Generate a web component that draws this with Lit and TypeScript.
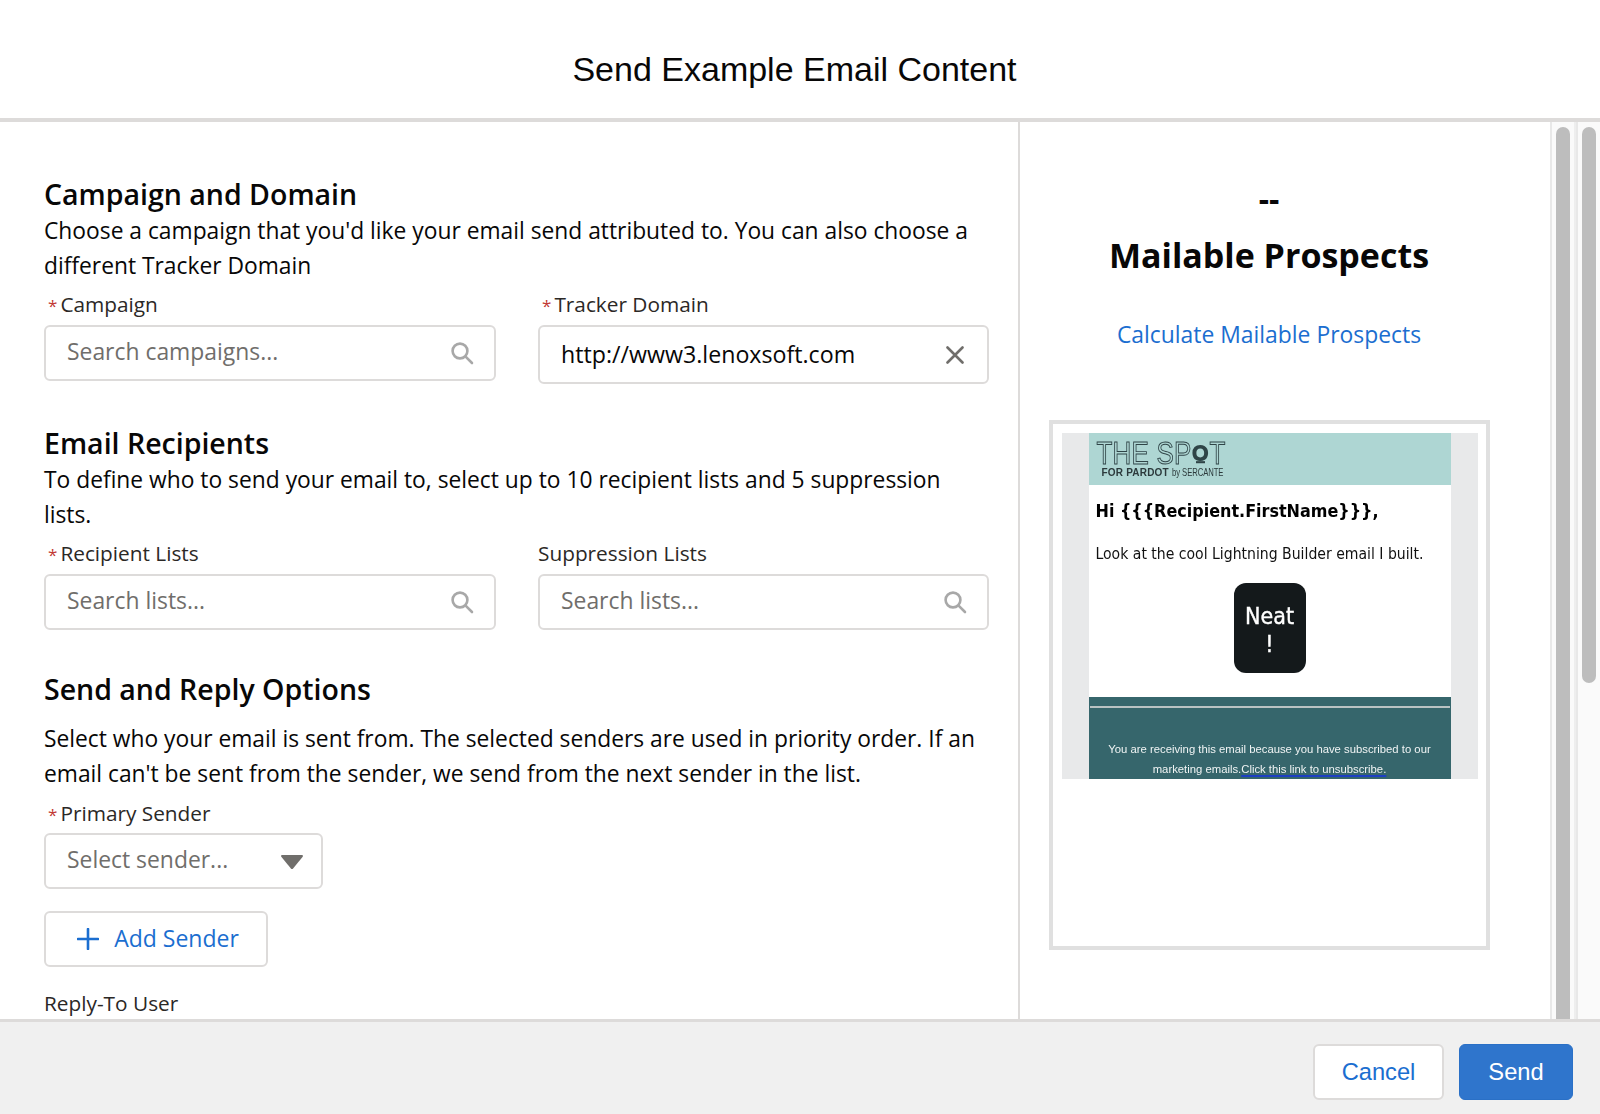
import { LitElement, html, css } from "lit";
import { customElement } from "lit/decorators.js";

const searchIcon = html`<svg class="ic" width="24" height="24" viewBox="0 0 24 24" fill="none" stroke="#a8a8a8" stroke-width="2.6" stroke-linecap="round"><circle cx="10" cy="10" r="7.4"/><path d="M15.6 15.6 22 22"/></svg>`;

@customElement("app-root")
export class AppRoot extends LitElement {
  static styles = css`
    :host { display: block; }
    * { box-sizing: border-box; }
    .modal { width: 1600px; height: 1114px; display: flex; flex-direction: column; overflow: hidden; background: #fff; font-family: "Open Sans", "Noto Sans", sans-serif; color: #080707; }
    .top { height: 122px; flex: none; border-bottom: 4px solid #dddbda; display: flex; align-items: center; justify-content: center; padding: 20px 11px 0 0; }
    .top h1 { margin: 0; font: 400 34px/44px "Liberation Sans", Arial, sans-serif; color: #080707; }
    .body { flex: 1; min-height: 0; display: flex; }
    .left { width: 1020px; flex: none; border-right: 2px solid #dddbda; padding: 55px 29px 0 44px; overflow: hidden; }
    .sec { margin-bottom: 42px; }
    h2 { margin: 0; font-size: 28.5px; line-height: 35px; font-weight: 600; color: #080707; }
    p { margin: 1px 0 0; font-size: 22.8px; line-height: 35px; }
    .sec3 p { margin-top: 14px; }
    .row { display: grid; grid-template-columns: 452px 451px; column-gap: 42px; align-items: start; margin-top: 6px; }
    label { display: block; font-size: 20.8px; line-height: 30px; color: #2b2826; margin-bottom: 6px; white-space: nowrap; }
    label.req { padding-left: 4px; }
    .star { color: #c23934; font-size: 17px; line-height: 0; margin-right: 3px; }
    .input { height: 56px; border: 2px solid #dddbda; border-radius: 6px; background: #fff; display: flex; align-items: center; justify-content: space-between; padding: 0 20px 3px 21px; font-size: 22.9px; color: #706e6b; }
    .input .ic { margin-top: 3px; }
    .input.value { height: 59px; color: #080707; padding: 0 23px 2px 21px; font-size: 23.2px; }
    .input.value svg { margin-top: 2px; }
    .select { width: 279px; padding-right: 18px; margin-top: -1px; }
    .select svg { margin-top: 5px; }
    .sp { height: 7px; }
    .add { width: 224px; height: 56px; margin-top: 22px; border: 2px solid #dddbda; border-radius: 6px; display: flex; align-items: center; justify-content: center; gap: 15px; font-size: 23px; color: #1b6ed0; background: #fff; padding: 0 0 2px 4px; }
    .add svg { margin-top: 2px; }
    .reply { margin: 21px 0 0; }
    .right { flex: 1; min-width: 0; display: flex; flex-direction: column; align-items: center; padding: 59px 32px 0 0; }
    .dash { font-size: 32px; font-weight: 700; line-height: 35px; }
    .mail { font-size: 34px; font-weight: 700; line-height: 44px; margin-top: 17px; color: #080707; }
    .calc { font-size: 22.9px; line-height: 34px; color: #1b6ed0; margin-top: 41px; }
    .frame { width: 441px; height: 530px; margin-top: 68px; border: 4px solid #e0e0e0; padding: 9px; flex: none; }
    .shot { height: 346px; width: 416px; background: #e8e9ea; padding: 0 27px; filter: blur(0.35px); }
    .mail-body { height: 100%; background: #fff; display: flex; flex-direction: column; }
    .banner { height: 51.5px; background: #aed6d3; padding: 4px 0 0 8px; color: #2c3a3c; flex: none; overflow: hidden; }
    .logo { font: 400 26px/26px "Liberation Sans", Arial, sans-serif; color: transparent; -webkit-text-stroke: 0.8px #2f4447; white-space: nowrap; height: 29px; letter-spacing: 0.2px; transform: scaleY(1.22); transform-origin: top left; }
    .o { position: relative; display: inline-block; font-size: 20px; line-height: 20px; vertical-align: 2px; -webkit-text-stroke: 2px #2f4447; margin: 0 1px; transform: scaleY(0.85); }
    .o::after { content: ""; position: absolute; left: 3px; right: 3px; bottom: 0; height: 2px; background: #2f4447; }
    .sub { font: 700 10px/12px "Liberation Sans", Arial, sans-serif; margin-left: 5px; letter-spacing: 0.2px; white-space: nowrap; }
    .sub span { display: inline-block; font: 400 11px/12px "Liberation Sans", sans-serif; letter-spacing: -0.1px; transform: scaleX(0.7); transform-origin: left center; }
    .hi { font: 700 17.8px/24px "DejaVu Sans Condensed", "DejaVu Sans", sans-serif; margin: 14.5px 0 0 7px; color: #000; white-space: nowrap; }
    .look { font: 400 15.6px/20px "DejaVu Sans Condensed", "DejaVu Sans", sans-serif; margin: 21px 0 0 7px; color: #111; white-space: nowrap; }
    .neat { width: 72px; height: 90px; margin: 19px auto 0; background: #14191b; border-radius: 12px; color: #fff; -webkit-text-stroke: 0.4px #fff; font: 400 23px/28px "DejaVu Sans Condensed", "DejaVu Sans", sans-serif; text-align: center; padding-top: 19px; flex: none; }
    .foot { flex: 1; margin-top: 24px; background: #36666c; color: #f0f4f4; font: 400 11.3px/20px "Liberation Sans", Arial, sans-serif; text-align: center; padding-top: 42px; position: relative; white-space: nowrap; overflow: hidden; }
    .foot::before { content: ""; position: absolute; left: 1px; right: 1px; top: 9px; height: 2px; background: #b9c2c3; }
    .foot u { text-decoration-color: #1c3fc4; text-underline-offset: 2px; text-decoration-thickness: 1.5px; }
    .bars { width: 50px; flex: none; display: flex; }
    .track { width: 26px; flex: none; background: #fafafa; border-left: 2px solid #e8e8e8; border-right: 2px solid #eee; padding: 5px 4px 0; }
    .thumb { width: 14px; border-radius: 7px 7px 0 0; background: #bdbdbd; height: 920px; }
    .thumb.short { height: 556px; border-radius: 7px; }
    .bottom { height: 95px; flex: none; background: #f0f0f0; border-top: 3px solid #dddbda; display: flex; justify-content: flex-end; align-items: flex-start; gap: 15px; padding: 22px 27px 0 0; }
    .btn { height: 56px; border-radius: 6px; display: flex; align-items: center; justify-content: center; font: 400 23.7px "Liberation Sans", Arial, sans-serif; }
    .cancel { width: 131px; background: #fff; border: 2px solid #dddbda; color: #1b6ed0; }
    .send { width: 114px; background: #2f75cc; color: #fff; border: 1px solid #2a70c6; }
  `;

  render() {
    return html`
      <div class="modal">
        <header class="top"><h1>Send Example Email Content</h1></header>
        <div class="body">
          <main class="left">
            <section class="sec">
              <h2>Campaign and Domain</h2>
              <p>Choose a campaign that you'd like your email send attributed to. You can also choose a different Tracker Domain</p>
              <div class="row">
                <div><label class="req"><span class="star">*</span>Campaign</label><div class="input"><span>Search campaigns...</span>${searchIcon}</div></div>
                <div><label class="req"><span class="star">*</span>Tracker Domain</label><div class="input value"><span>http://www3.lenoxsoft.com</span><svg width="18" height="18" viewBox="0 0 18 18" stroke="#706e6b" stroke-width="2.6" stroke-linecap="round"><path d="M1.5 1.5l15 15M16.5 1.5l-15 15"/></svg></div></div>
              </div>
            </section>
            <section class="sec">
              <h2>Email Recipients</h2>
              <p>To define who to send your email to, select up to 10 recipient lists and 5 suppression lists.</p>
              <div class="row">
                <div><label class="req"><span class="star">*</span>Recipient Lists</label><div class="input"><span>Search lists...</span>${searchIcon}</div></div>
                <div><label>Suppression Lists</label><div class="input"><span>Search lists...</span>${searchIcon}</div></div>
              </div>
            </section>
            <section class="sec3">
              <h2>Send and Reply Options</h2>
              <p>Select who your email is sent from. The selected senders are used in priority order. If an email can't be sent from the sender, we send from the next sender in the list.</p>
              <div class="sp"></div>
              <label class="req"><span class="star">*</span>Primary Sender</label>
              <div class="input select"><span>Select sender...</span><svg width="22" height="14" viewBox="0 0 22 14" fill="#706e6b"><path d="M1.2 0h19.6c1 0 1.5 1 .9 1.8l-9.6 11.6c-.6.7-1.6.7-2.2 0L.3 1.8C-.3 1 .2 0 1.2 0z"/></svg></div>
              <div class="add"><svg width="22" height="22" viewBox="0 0 22 22" stroke="#1b6ed0" stroke-width="2.6" stroke-linecap="round"><path d="M11 1v20M1 11h20"/></svg><span>Add Sender</span></div>
              <label class="reply">Reply-To User</label>
            </section>
          </main>
          <aside class="right">
            <div class="dash">--</div>
            <div class="mail">Mailable Prospects</div>
            <div class="calc">Calculate Mailable Prospects</div>
            <div class="frame">
              <div class="shot">
                <div class="mail-body">
                  <div class="banner">
                    <div class="logo">THE SP<span class="o">O</span>T</div>
                    <div class="sub">FOR PARDOT <span>by SERCANTE</span></div>
                  </div>
                  <div class="hi">Hi {{{Recipient.FirstName}}},</div>
                  <div class="look">Look at the cool Lightning Builder email I built.</div>
                  <div class="neat">Neat<br />!</div>
                  <div class="foot">You are receiving this email because you have subscribed to our<br />marketing emails.<u>Click this link to unsubscribe.</u></div>
                </div>
              </div>
            </div>
          </aside>
          <div class="bars">
            <div class="track"><div class="thumb"></div></div>
            <div class="track"><div class="thumb short"></div></div>
          </div>
        </div>
        <footer class="bottom">
          <div class="btn cancel">Cancel</div>
          <div class="btn send">Send</div>
        </footer>
      </div>
    `;
  }
}
